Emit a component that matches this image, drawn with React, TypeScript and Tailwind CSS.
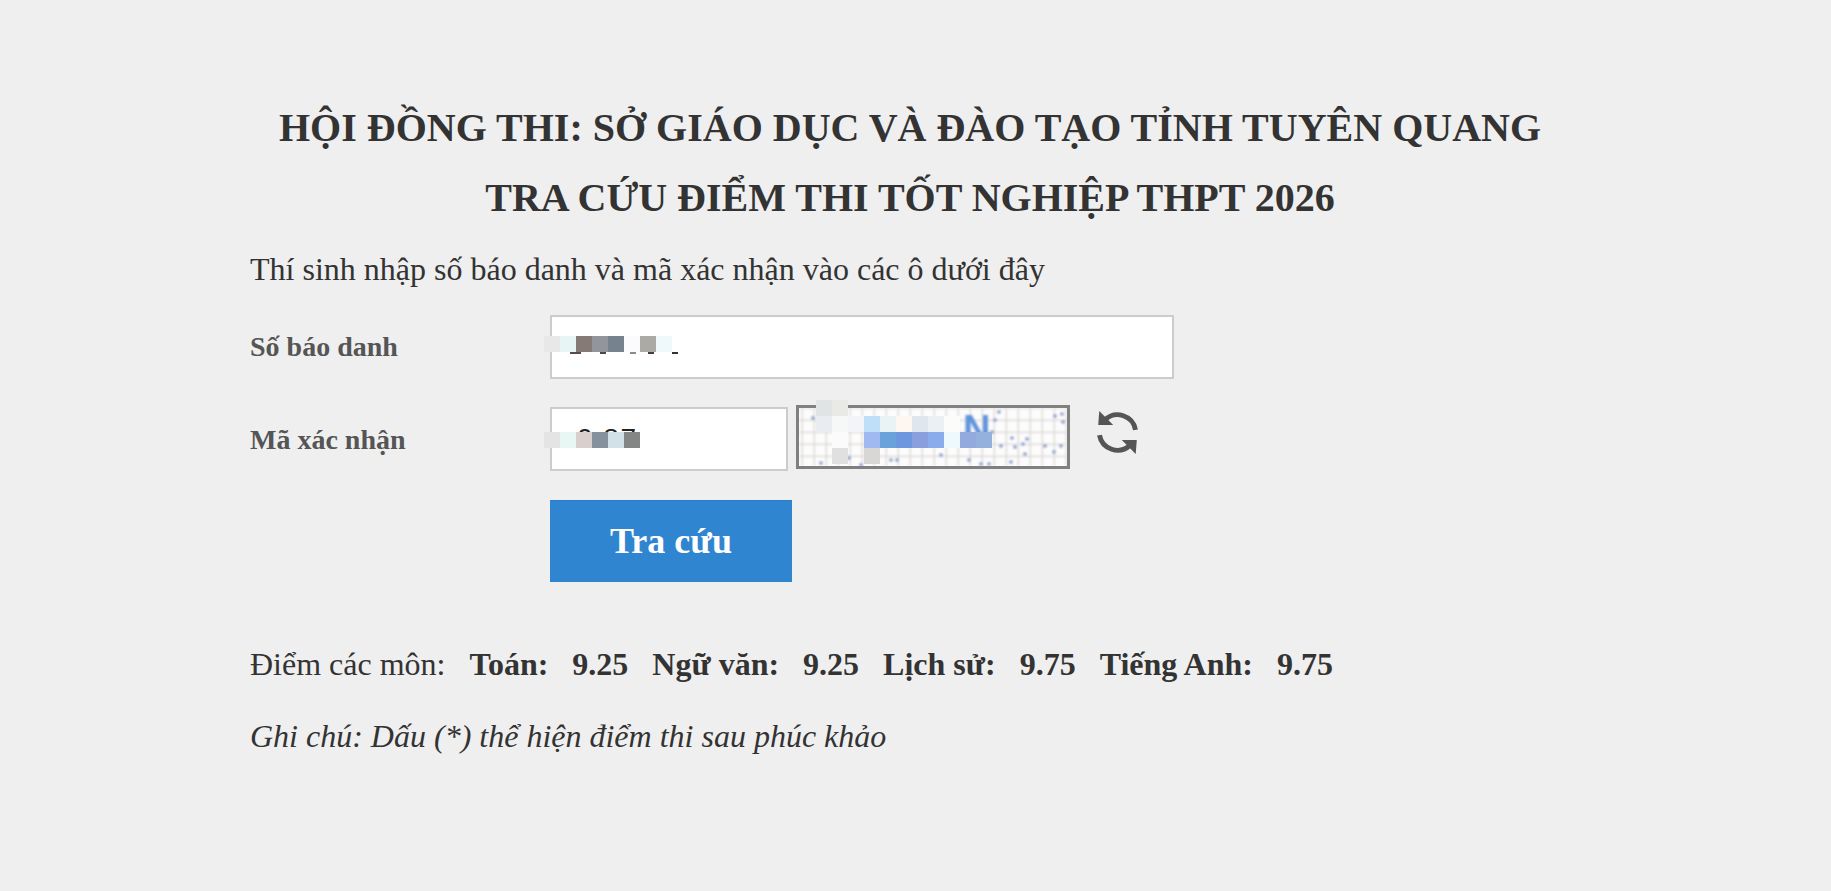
const serif = { fontFamily: '"Liberation Serif", "Times New Roman", serif' }

type Cell = [number, number, string]

// pixelated patches that sit over the inputs and the captcha
const NUMBER_PATCH: Cell[] = [
  [0, 0, '#e8e8e8'], [1, 0, '#e8f5f5'], [2, 0, '#857a75'], [3, 0, '#92969c'],
  [4, 0, '#76838f'], [5, 0, '#fbfbfd'], [6, 0, '#abaaa5'], [7, 0, '#eff8fb'],
]
const CODE_PATCH: Cell[] = [
  [0, 0, '#e4e4e4'], [1, 0, '#e8f7f3'], [2, 0, '#d9cfcd'], [3, 0, '#85929e'],
  [4, 0, '#d2e0e7'], [5, 0, '#848686'],
]
const CAPTCHA_PATCH: Cell[] = [
  [0, 0, '#e0e4e4'], [1, 0, '#e9e9e6'],
  [0, 1, '#e9edf2'], [1, 1, '#f6f7f7'], [2, 1, '#f2f4f9'], [3, 1, '#bfdef8'], [4, 1, '#e9f3f6'],
  [5, 1, '#fdf6f1'], [6, 1, '#dfe6ee'], [7, 1, '#eaf0f4'], [8, 1, '#fcfdfb'],
  [1, 2, '#fbfbfb'], [3, 2, '#a0b9f0'], [4, 2, '#6aa3dc'], [5, 2, '#6d97de'], [6, 2, '#8a9fde'],
  [7, 2, '#8aabec'], [8, 2, '#eef9fd'], [9, 2, '#92aadd'], [10, 2, '#94b0dc'],
  [1, 3, '#e0e0e0'], [3, 3, '#d8d7d5'],
]

const DOTS = [
  [14, 10], [22, 55], [50, 50], [62, 57], [92, 52], [98, 52], [133, 32], [142, 47], [170, 52], [182, 56],
  [147, 30], [176, 30], [196, 12], [200, 4], [193, 24], [202, 38], [213, 30], [216, 39], [224, 36], [226, 46],
  [228, 31], [246, 38], [255, 44], [264, 14], [262, 38], [256, 8], [263, 6], [212, 54], [190, 56],
]

function Patch({ cells }: { cells: Cell[] }) {
  return (
    <>
      {cells.map(([x, y, c]) => (
        <div key={`${x}-${y}`} className="absolute w-4 h-4" style={{ left: x * 16, top: y * 16, background: c }} />
      ))}
    </>
  )
}

function CaptchaImage() {
  return (
    <div className="relative w-[274px] h-[64px] shrink-0">
      <svg width="274" height="64" viewBox="0 0 268 58" className="block border-[3px] border-[#808080] bg-[#fcfcfc]">
        <defs>
          <pattern id="grid" x="4" y="1" width="12" height="12" patternUnits="userSpaceOnUse">
            <path d="M12 0V12M0 12H12" stroke="#dad7d4" strokeWidth="2.6" fill="none" />
          </pattern>
        </defs>
        <g className="blur-[0.8px]">
          <rect width="268" height="58" fill="url(#grid)" />
          <text x="164" y="34" fontSize="38" fontWeight="700" fill="#5f93dc" fontFamily="Liberation Sans, sans-serif">N</text>
          {DOTS.map(([x, y], i) => (
            <circle key={i} cx={x} cy={y} r="1.8" fill="#6880c2" opacity="0.8" />
          ))}
        </g>
      </svg>
      <div className="absolute left-[20px] top-[-5px]">
        <Patch cells={CAPTCHA_PATCH} />
      </div>
    </div>
  )
}

function RefreshIcon() {
  return (
    <svg width="45" height="45" viewBox="0 0 42 42" fill="none" className="ml-[25px] mt-[5px] shrink-0">
      <path d="M9.5 9A17 17 0 0 1 37.8 18.5" stroke="#555" strokeWidth="4.6" />
      <path d="M4.2 23.5A17 17 0 0 0 32.5 33" stroke="#555" strokeWidth="4.6" />
      <path d="M4 1L3 14H17Z" fill="#555" />
      <path d="M38 41L39 28H25Z" fill="#555" />
    </svg>
  )
}

export default function App() {
  return (
    <div className="min-h-[891px] bg-[#efefef] text-[#333]" style={serif}>
      <div className="w-[1320px] ml-[250px] pt-[93px]">
        <h1 className="text-center text-[40px] leading-[70px] font-bold">HỘI ĐỒNG THI: SỞ GIÁO DỤC VÀ ĐÀO TẠO TỈNH TUYÊN QUANG</h1>
        <h1 className="text-center text-[40px] leading-[70px] font-bold">TRA CỨU ĐIỂM THI TỐT NGHIỆP THPT 2026</h1>
        <p className="text-[32px] leading-[70px] mt-[1px]">Thí sinh nhập số báo danh và mã xác nhận vào các ô dưới đây</p>

        <div className="flex items-center mt-[11px] h-[64px]">
          <label className="w-[300px] text-[28px] font-bold text-[#555]">Số báo danh</label>
          <div className="relative w-[624px] h-[64px] border-2 border-[#ccc] bg-white">
            <div className="absolute left-[-8px] top-[19px]">
              <Patch cells={NUMBER_PATCH} />
              <div className="absolute left-[26px] top-[16px] w-[11px] h-[2px] bg-[#5a4a4a]" />
              <div className="absolute left-[56px] top-[16px] w-[6px] h-[2px] bg-[#3f4a52]" />
              <div className="absolute left-[86px] top-[16px] w-[6px] h-[2px] bg-[#8a8a90]" />
              <div className="absolute left-[104px] top-[16px] w-[6px] h-[2px] bg-[#4a3a3a]" />
              <div className="absolute left-[128px] top-[16px] w-[6px] h-[2px] bg-[#333]" />
            </div>
          </div>
        </div>

        <div className="flex items-start mt-[26px]">
          <label className="w-[300px] text-[28px] font-bold text-[#555] leading-[63px] mt-[3px]">Mã xác nhận</label>
          <div className="relative w-[238px] h-[64px] mt-[2px] border-2 border-[#ccc] bg-white shrink-0">
            <input readOnly value="0 87" className="w-full h-full pl-[25px] text-[28px] tracking-[1.5px] text-[#222] outline-none bg-transparent" style={{ fontFamily: '"Liberation Sans", Arial, sans-serif' }} />
            <div className="absolute left-[-8px] top-[23px]">
              <Patch cells={CODE_PATCH} />
            </div>
          </div>
          <div className="ml-[8px]">
            <CaptchaImage />
          </div>
          <RefreshIcon />
        </div>

        <button className="block ml-[300px] mt-[29px] w-[242px] h-[82px] pb-[1px] bg-[#3085d0] border-t border-[#2a7ccb] text-white text-[36px] font-bold">Tra cứu</button>

        <div className="flex gap-[24px] mt-[57px] text-[32px] leading-[50px]">
          <span>Điểm các môn:</span>
          <b>Toán:</b>
          <b>9.25</b>
          <b>Ngữ văn:</b>
          <b>9.25</b>
          <b>Lịch sử:</b>
          <b>9.75</b>
          <b>Tiếng Anh:</b>
          <b>9.75</b>
        </div>
        <p className="mt-[22px] text-[32px] leading-[50px] italic">Ghi chú: Dấu (*) thể hiện điểm thi sau phúc khảo</p>
      </div>
    </div>
  )
}
